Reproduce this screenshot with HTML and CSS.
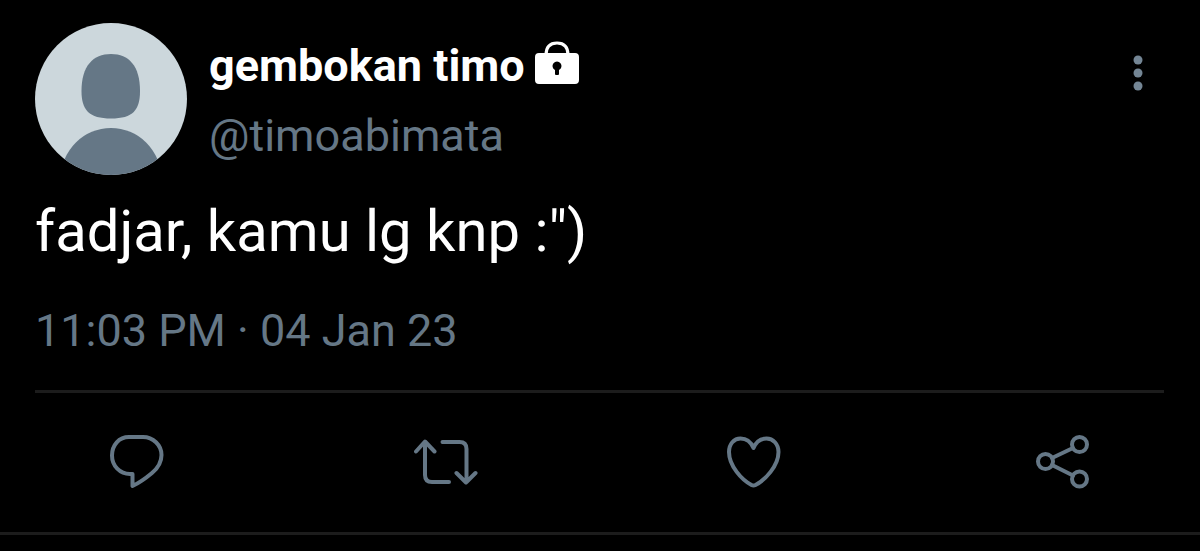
FILE: index.html
```html
<!DOCTYPE html>
<html lang="id">
<head>
<meta charset="utf-8">
<meta name="viewport" content="width=device-width, initial-scale=1">
<title>gembokan timo</title>
<link rel="stylesheet" href="styles.css">
</head>
<body>
<article class="tweet">
  <header class="tweet-header">
    <svg class="avatar" viewBox="0 0 152 152" role="img" aria-label="Avatar">
      <defs><clipPath id="round"><circle cx="76" cy="76" r="76"/></clipPath></defs>
      <g clip-path="url(#round)">
        <rect class="avatar-back" width="152" height="152"/>
        <path class="avatar-person" d="M76 31C94 31 105 43 105 68C105 87 98 95.500 76 95.500C54 95.500 46.500 87 46.500 68C46.500 43 58 31 76 31Z"/>
        <circle class="avatar-person" cx="76" cy="155" r="50"/>
      </g>
    </svg>
    <div class="author">
      <div class="name">
        <span>gembokan timo</span>
        <svg class="lock" viewBox="0 0 44 44" role="img" aria-label="Protected account">
          <path class="lock-shackle" d="M11 14C11 6 15 2 22 2S33 6 33 14"/>
          <path class="lock-body" fill-rule="evenodd" d="M4 12H40Q44 12 44 16V39Q44 43 40 43H4Q0 43 0 39V16Q0 12 4 12ZM20 29V33Q20 34 21 34H23Q24 34 24 33V29A4.5 4.5 0 1 0 20 29Z"/>
        </svg>
      </div>
      <a class="handle" href="#profile">@timoabimata</a>
    </div>
    <button class="more" type="button" aria-label="More">
      <svg class="more-icon" viewBox="0 0 12 36"><circle cx="6" cy="5" r="4.5"/><circle cx="6" cy="18" r="4.5"/><circle cx="6" cy="31" r="4.5"/></svg>
    </button>
  </header>
  <p class="message">fadjar, kamu lg knp :")</p>
  <time class="date" datetime="2023-01-04T23:03">11:03 PM · 04 Jan 23</time>
  <footer class="actions">
    <button class="action" type="button" aria-label="Reply">
      <svg class="icon" viewBox="0 0 64 64"><path d="M24 7H38C48 7 56.500 15 56.500 25C56.500 32 53 38 47 43C41 48 34 53 27.500 56V44H25C15 44 7 36 7 25.500C7 15 14 7 24 7Z"/></svg>
    </button>
    <button class="action" type="button" aria-label="Retweet">
      <svg class="icon" viewBox="0 0 64 64"><path d="M2 21.500L11 11.500L20.500 21.500M11 12V45Q11 52 18 52H35M28.500 12H45.500Q52.500 12 52.500 19V52M42.500 43L52 52.500L61.500 43"/></svg>
    </button>
    <button class="action" type="button" aria-label="Like">
      <svg class="icon" viewBox="0 0 64 64"><path d="M31.500 18C29 12 24 8.500 18.500 8.500C12 8.500 7 14 7 22C7 36 20 50 29.500 55Q31.500 56 33.500 55C43 50 56.500 36 56.500 22C56.500 14 51 8.500 44.500 8.500C39 8.500 34 12 31.500 18Z"/></svg>
    </button>
    <button class="action" type="button" aria-label="Share">
      <svg class="icon" viewBox="0 0 64 64"><circle cx="14.500" cy="31.500" r="7.500"/><circle cx="48.500" cy="14.500" r="7.500"/><circle cx="48.500" cy="49" r="7.500"/><path d="M21 28L42 18M21 35L42 45.500"/></svg>
    </button>
  </footer>
</article>
</body>
</html>
```

FILE: styles.css
```css
* {
  box-sizing: border-box;
}

body {
  margin: 0;
  background: #000;
  color: #fff;
  font-family: Roboto, "Liberation Sans", sans-serif;
}

button {
  border: 0;
  padding: 0;
  background: none;
  color: inherit;
  cursor: pointer;
}

svg {
  display: block;
}

.tweet {
  padding: 23px 36px 0 35px;
  border-bottom: 3px solid #1c1c1c;
}

.tweet-header {
  display: flex;
  align-items: flex-start;
  gap: 22px;
}

.avatar {
  width: 152px;
  height: 152px;
  flex: none;
}

.avatar-back {
  fill: #ccd7dc;
}

.avatar-person {
  fill: #657786;
}

.author {
  flex: 1;
  display: flex;
  flex-direction: column;
  align-items: flex-start;
  gap: 16px;
  padding-top: 16px;
}

.name {
  display: flex;
  align-items: center;
  gap: 10px;
  font-size: 45px;
  line-height: 54px;
  font-weight: 700;
}

.lock {
  width: 44px;
  height: 44px;
  margin-bottom: 6px;
}

.lock-shackle {
  fill: none;
  stroke: #fff;
  stroke-width: 3;
}

.lock-body {
  fill: #fff;
}

.handle {
  color: #657786;
  font-size: 45px;
  line-height: 54px;
  text-decoration: none;
}

.more {
  padding: 32px 20px 0;
}

.more-icon {
  width: 12px;
  height: 36px;
  fill: #748695;
}

.message {
  margin: 20px 0 0;
  font-size: 58px;
  line-height: 72px;
}

.date {
  display: block;
  margin-top: 37px;
  color: #657786;
  font-size: 45px;
  line-height: 54px;
}

.actions {
  display: flex;
  justify-content: space-between;
  margin-top: 32px;
  padding: 37px 69px 38px 70px;
  border-top: 3px solid #1c1c1c;
}

.icon {
  width: 64px;
  height: 64px;
  fill: none;
  stroke: #657786;
  stroke-width: 4;
  stroke-linecap: round;
  stroke-linejoin: round;
}
```
